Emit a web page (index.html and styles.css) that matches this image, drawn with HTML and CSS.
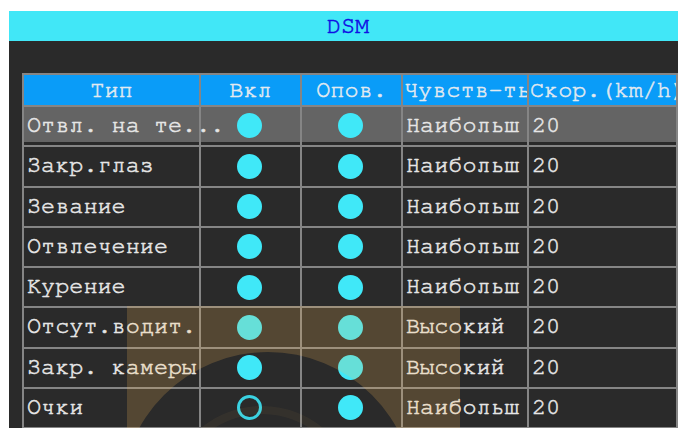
FILE: index.html
```html
<!DOCTYPE html>
<html lang="ru">
<head>
<meta charset="utf-8">
<title>DSM</title>
<link rel="stylesheet" href="styles.css">
</head>
<body>
<div class="screen">
  <div class="panel">
    <div class="titlebar">DSM</div>
    <div class="content">
      <div class="grid">
        <div class="cell head">Тип</div>
        <div class="cell head">Вкл</div>
        <div class="cell head">Опов.</div>
        <div class="cell head clip">Чувств-ть</div>
        <div class="cell head clip">Скор.(km/h)</div>

        <div class="cell name sel">Отвл. на те...</div>
        <div class="cell dot sel"><span class="led"></span></div>
        <div class="cell dot sel"><span class="led"></span></div>
        <div class="cell txt sel">Наибольш</div>
        <div class="cell txt sel">20</div>

        <div class="cell name">Закр.глаз</div>
        <div class="cell dot"><span class="led"></span></div>
        <div class="cell dot"><span class="led"></span></div>
        <div class="cell txt">Наибольш</div>
        <div class="cell txt">20</div>

        <div class="cell name">Зевание</div>
        <div class="cell dot"><span class="led"></span></div>
        <div class="cell dot"><span class="led"></span></div>
        <div class="cell txt">Наибольш</div>
        <div class="cell txt">20</div>

        <div class="cell name">Отвлечение</div>
        <div class="cell dot"><span class="led"></span></div>
        <div class="cell dot"><span class="led"></span></div>
        <div class="cell txt">Наибольш</div>
        <div class="cell txt">20</div>

        <div class="cell name">Курение</div>
        <div class="cell dot"><span class="led"></span></div>
        <div class="cell dot"><span class="led"></span></div>
        <div class="cell txt">Наибольш</div>
        <div class="cell txt">20</div>

        <div class="cell name">Отсут.водит.</div>
        <div class="cell dot"><span class="led"></span></div>
        <div class="cell dot"><span class="led"></span></div>
        <div class="cell txt">Высокий</div>
        <div class="cell txt">20</div>

        <div class="cell name">Закр. камеры</div>
        <div class="cell dot"><span class="led"></span></div>
        <div class="cell dot"><span class="led"></span></div>
        <div class="cell txt">Высокий</div>
        <div class="cell txt">20</div>

        <div class="cell name">Очки</div>
        <div class="cell dot"><span class="led off"></span></div>
        <div class="cell dot"><span class="led"></span></div>
        <div class="cell txt">Наибольш</div>
        <div class="cell txt">20</div>
      </div>
    </div>
  </div>
  <!-- translucent camera watermark drawn over the list -->
  <svg class="watermark" width="678" height="428" viewBox="0 0 678 428" aria-hidden="true">
    <path fill="rgba(255,190,90,0.2)" fill-rule="evenodd"
          d="M127 306 H460 V440 H127 Z M121 499 a147 147 0 1 0 294 0 a147 147 0 1 0 -294 0 Z"/>
    <circle cx="262" cy="502" r="92" fill="none" stroke="rgba(255,190,90,0.05)" stroke-width="8"/>
  </svg>
</div>
</body>
</html>
```

FILE: styles.css
```css
* {
  box-sizing: border-box;
}

html,
body {
  margin: 0;
  padding: 0;
  background: #ffffff;
  overflow: hidden;
}

.screen {
  position: relative;
  width: 678px;
  height: 428px;
  overflow: hidden;
  padding: 11px 0 0 9px;
  font-family: "Nimbus Mono PS", "Nimbus Mono L", "FreeMono", "Courier", "Courier New", "Liberation Mono", monospace;
  font-size: 23.5px;
  -webkit-text-stroke: 0.55px currentColor;
}

.panel {
  width: 678px;
  height: 440px;
  background: #2a2a2a;
}

.titlebar {
  height: 30px;
  background: #41e7f7;
  color: #1010e4;
  text-align: center;
  line-height: 30px;
}

.content {
  padding: 32px 0 0 13px;
}

.grid {
  display: grid;
  grid-template-columns: 175px 99px 99px 124px 147px;
  grid-template-rows: 30px repeat(8, 38.25px);
  gap: 2px;
  padding: 2px;
  width: 656px;
  background: #858585;
}

.cell {
  display: flex;
  align-items: center;
  background: #2a2a2a;
  color: #e6e6e6;
  white-space: nowrap;
  min-width: 0;
  padding-bottom: 2px;
}

.head {
  background: #0a9cf8;
  color: #e2eaf0;
  justify-content: center;
  padding-bottom: 1px;
}

.clip {
  justify-content: flex-start;
  overflow: hidden;
  padding-left: 1px;
}

.name {
  padding-left: 3px;
  z-index: 1;
}

.txt {
  padding-left: 3px;
}

.dot {
  justify-content: center;
  padding-right: 3px;
  padding-bottom: 0;
}

.sel {
  background: #646464;
  border-bottom: 3px solid #2a2a2a;
  padding-bottom: 0;
}

.led {
  display: block;
  width: 25px;
  height: 25px;
  border-radius: 50%;
  background: #40e8f8;
}

.sel .led {
  margin-top: 2px;
}

.led.off {
  background: transparent;
  border: 3px solid #3ad2e2;
}

.watermark {
  position: absolute;
  left: 0;
  top: 0;
  z-index: 2;
  pointer-events: none;
}
```
